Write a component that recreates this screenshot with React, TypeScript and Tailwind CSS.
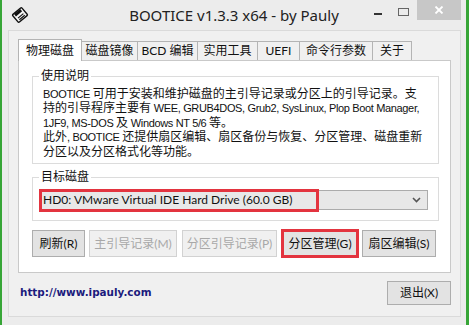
import React from "react";

const cjk = "font-['Lato','Noto_Sans_CJK_SC',sans-serif]";

function L({ children }: { children: React.ReactNode }) {
  return (
    <span className="font-['Liberation_Sans','Noto_Sans_CJK_SC',sans-serif] text-[11px] tracking-[-0.35px]">
      {children}
    </span>
  );
}

function DiskIcon() {
  return (
    <svg width="18" height="18" viewBox="0 0 18 18">
      <g transform="rotate(-40 9 9)">
        <rect x="3" y="4" width="12" height="10" rx="1" fill="#f4f4f4" stroke="#111" strokeWidth="1.4" />
        <rect x="5" y="4.5" width="8" height="3" fill="#111" />
        <rect x="5.5" y="9.5" width="7" height="1.2" fill="#111" />
        <rect x="5.5" y="11.6" width="7" height="1.2" fill="#111" />
      </g>
    </svg>
  );
}

function Tab({ label, w, active }: { label: string; w: number; active?: boolean }) {
  if (active) {
    return (
      <div
        className="relative z-10 -mb-px flex h-[22px] items-center justify-center border border-b-0 border-[#b4b4b4] bg-white text-[12px] text-[#111]"
        style={{ width: w }}
      >
        {label}
      </div>
    );
  }
  return (
    <div
      className="-ml-px flex h-[19px] items-center justify-center border border-b-0 border-[#b4b4b4] bg-[#f0f0f0] text-[12px] text-[#111]"
      style={{ width: w }}
    >
      {label}
    </div>
  );
}

function Btn({
  label,
  w,
  disabled,
  className = "",
}: {
  label: string;
  w: number;
  disabled?: boolean;
  className?: string;
}) {
  return (
    <div
      className={
        "flex h-[27px] items-center justify-center border text-[12px] " +
        (disabled
          ? "border-[#d2d2d2] bg-[#f0f0f0] text-[#a8a8a8] "
          : "border-[#adadad] bg-[#e3e3e3] text-[#111] ") +
        className
      }
      style={{ width: w }}
    >
      {label}
    </div>
  );
}

export default function App() {
  return (
    <div className={"flex h-[325px] w-[469px] border-l-[2px] border-r-[3px] border-[#37a637] bg-[#ececec] " + cjk}>
      <div className="flex w-full flex-col">
        {/* title bar */}
        <div className="relative flex h-[30px] items-center">
          <div className="absolute left-[9px] top-[6px]">
            <DiskIcon />
          </div>
          <div className="w-full text-center font-['Noto_Sans',sans-serif] text-[15px] leading-[30px] text-[#222]">
            BOOTICE v1.3.3 x64 - by Pauly
          </div>
          <div className="absolute left-[372px] top-[13px] h-[2px] w-[8px] bg-[#333]" />
          <div className="absolute left-[396px] top-[8px] h-[8px] w-[11px] border border-[#666]" />
          <div className="absolute left-[415px] top-0 flex h-[20px] w-[44px] items-center justify-center bg-[#c7c7c7]">
            <svg width="10" height="8" viewBox="0 0 10 8">
              <path d="M1.5 0.5 L8.5 7.5 M8.5 0.5 L1.5 7.5" stroke="#fff" strokeWidth="1.8" />
            </svg>
          </div>
        </div>

        {/* client area */}
        <div className="ml-[6px] flex h-[287px] w-[453px] flex-col border border-[#dadada] bg-[#f0f0f0]">
          {/* tabs */}
          <div className="ml-[9px] mt-[7px] flex h-[22px] items-end">
            <Tab label="物理磁盘" w={64} active />
            <Tab label="磁盘镜像" w={57} />
            <Tab label="BCD 编辑" w={61} />
            <Tab label="实用工具" w={61} />
            <Tab label="UEFI" w={43} />
            <Tab label="命令行参数" w={74} />
            <Tab label="关于" w={40} />
          </div>

          {/* panel */}
          <div className="ml-[9px] flex h-[213px] w-[433px] flex-col border border-[#c9c9c9] bg-white text-[#111]">
            <fieldset className="ml-[13px] mt-[8px] h-[95px] w-[407px] border border-[#dcdcdc] px-[10px]">
              <legend className="ml-[-4px] px-[2px] text-[12px] leading-[14px]">使用说明</legend>
              <div className="whitespace-nowrap pt-[4px] text-[12px] leading-[13.4px]">
                <div>
                  <L>BOOTICE </L>可用于安装和维护磁盘的主引导记录或分区上的引导记录。支
                </div>
                <div>
                  持的引导程序主要有<L> WEE, GRUB4DOS, Grub2, SysLinux, Plop Boot Manager,</L>
                </div>
                <div>
                  <L>1JF9, MS-DOS </L>及<L> Windows NT 5/6 </L>等。
                </div>
                <div>
                  此外<L>, BOOTICE </L>还提供扇区编辑、扇区备份与恢复、分区管理、磁盘重新
                </div>
                <div>分区以及分区格式化等功能。</div>
              </div>
            </fieldset>

            <fieldset className="ml-[13px] mt-[6px] h-[51px] w-[407px] border border-[#dcdcdc] px-[7px]">
              <legend className="ml-[-1px] px-[2px] text-[12px] leading-[14px]">目标磁盘</legend>
              <div className="relative mt-[6px] flex h-[20px] w-[388px] items-center border border-[#acacac] bg-[#e8e8e8] pl-[2px] pr-[6px] text-[12px]">
                <span className="flex-1 whitespace-nowrap">HD0: VMware Virtual IDE Hard Drive (60.0 GB)</span>
                <svg width="9" height="6" viewBox="0 0 9 6">
                  <path d="M1 1 L4.5 4.5 L8 1" stroke="#555" strokeWidth="1.6" fill="none" />
                </svg>
                <div className="absolute left-[-2px] top-[-2px] h-[23px] w-[280px] border-[3px] border-[#e3343f]" />
              </div>
            </fieldset>

            <div className="ml-[13px] mt-[9px] flex">
              <Btn label="刷新(R)" w={53} />
              <Btn label="主引导记录(M)" w={88} disabled className="ml-[4px]" />
              <Btn label="分区引导记录(P)" w={95} disabled className="ml-[5px]" />
              <div className="relative ml-[5px]">
                <Btn label="分区管理(G)" w={76} />
                <div className="absolute -inset-px border-[3px] border-[#e3343f]" />
              </div>
              <Btn label="扇区编辑(S)" w={74} className="ml-[4px]" />
            </div>
          </div>

          {/* bottom */}
          <div className="mt-[8px] flex items-center">
            <div className="ml-[11px] flex-1 font-['DejaVu_Sans',sans-serif] text-[10.4px] font-bold text-[#1b1b7d]">
              http://www.ipauly.com
            </div>
            <div className="mr-[9px] flex h-[24px] w-[64px] items-center justify-center border border-[#adadad] bg-[#e3e3e3] text-[12px] text-[#111]">
              退出(X)
            </div>
          </div>
        </div>
      </div>
    </div>
  );
}
